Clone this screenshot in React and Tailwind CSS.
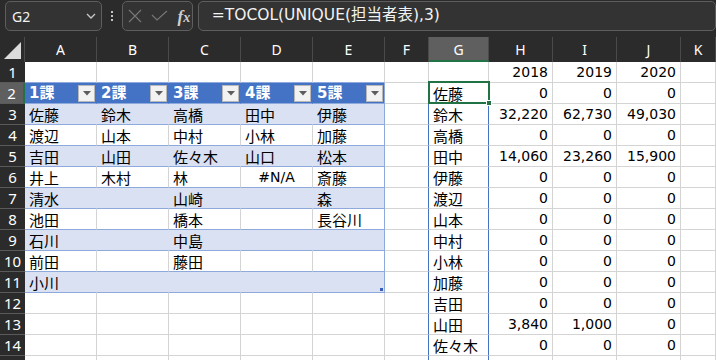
const COLS = ['A', 'B', 'C', 'D', 'E', 'F', 'G', 'H', 'I', 'J', 'K']

const TABLE = [
  ['佐藤', '鈴木', '高橋', '田中', '伊藤'],
  ['渡辺', '山本', '中村', '小林', '加藤'],
  ['吉田', '山田', '佐々木', '山口', '松本'],
  ['井上', '木村', '林', '#N/A', '斎藤'],
  ['清水', '', '山崎', '', '森'],
  ['池田', '', '橋本', '', '長谷川'],
  ['石川', '', '中島', '', ''],
  ['前田', '', '藤田', '', ''],
  ['小川', '', '', '', ''],
]

const NAMES = ['佐藤', '鈴木', '高橋', '田中', '伊藤', '渡辺', '山本', '中村', '小林', '加藤', '吉田', '山田', '佐々木']

const SALES = [
  ['0', '0', '0'],
  ['32,220', '62,730', '49,030'],
  ['0', '0', '0'],
  ['14,060', '23,260', '15,900'],
  ['0', '0', '0'],
  ['0', '0', '0'],
  ['0', '0', '0'],
  ['0', '0', '0'],
  ['0', '0', '0'],
  ['0', '0', '0'],
  ['0', '0', '0'],
  ['3,840', '1,000', '0'],
  ['0', '0', '0'],
]

const cjk = "font-['Noto_Sans_CJK_JP',sans-serif]"
const num = "font-['DejaVu_Sans','Noto_Sans_CJK_JP',sans-serif]"

function FilterButton() {
  return (
    <span className="flex h-[17px] w-[17px] items-center justify-center border border-[#b8b8b8] bg-[#f2f2f2]">
      <svg width="8" height="5" viewBox="0 0 8 5">
        <path d="M0 0h8L4 4.5z" fill="#5c5c5c" />
      </svg>
    </span>
  )
}

function FormulaBar() {
  return (
    <div className="flex h-[37px] items-start bg-[#2b2b2b] pl-[5px] pt-[1px] font-['Noto_Sans','Noto_Sans_CJK_JP',sans-serif] text-[#f2f2f2]">
      <div className="flex h-[30px] w-[101px] items-center justify-between rounded-[5px] border border-[#5e5e5e] bg-[#333333] pl-[6px] pr-[5px] text-[14px]">
        <span>G2</span>
        <svg width="10" height="6" viewBox="0 0 10 6">
          <path d="M1 1l4 4 4-4" fill="none" stroke="#c8c8c8" strokeWidth="1.3" />
        </svg>
      </div>
      <div className="flex h-[30px] w-[21px] flex-col items-center justify-center gap-[2px]">
        <span className="h-[2px] w-[2px] bg-[#c4c4c4]" />
        <span className="h-[2px] w-[2px] bg-[#c4c4c4]" />
        <span className="h-[2px] w-[2px] bg-[#c4c4c4]" />
      </div>
      <div className="flex h-[30px] w-[73px] items-center rounded-[5px] border border-[#5e5e5e] bg-[#333333] pl-[5px]">
        <svg width="14" height="14" viewBox="0 0 14 14">
          <path d="M1 1l12 12M13 1L1 13" stroke="#767676" strokeWidth="1.2" />
        </svg>
        <svg className="ml-[9px]" width="17" height="12" viewBox="0 0 17 12">
          <path d="M1 5l5 5L16 1" fill="none" stroke="#767676" strokeWidth="1.2" />
        </svg>
        <span className="ml-[9px] font-['Liberation_Serif',serif] text-[17px] font-bold italic leading-none text-[#cfcfcf]">
          f<span className="text-[14px]">x</span>
        </span>
      </div>
      <div className={`ml-[5px] flex h-[30px] w-[540px] items-center rounded-[5px] border border-[#5e5e5e] bg-[#333333] pl-[13px] text-[15.5px] ${num}`}>
        =TOCOL(UNIQUE(担当者表),3)
      </div>
    </div>
  )
}

function cellTone(r, c) {
  const inTable = c <= 4 && r >= 2 && r <= 11
  if (inTable) {
    const edge = c === 4
    if (r === 2) return edge ? 'bg-[#4472c4] border-r-[#8ea9db] border-b-[#8ea9db]' : 'bg-[#4472c4] border-r-[#4472c4] border-b-[#8ea9db]'
    if (r % 2 === 1) return edge ? 'bg-[#d9e1f2] border-r-[#8ea9db] border-b-[#8ea9db]' : 'bg-[#d9e1f2] border-r-[#d9e1f2] border-b-[#8ea9db]'
    return edge ? 'bg-white border-r-[#8ea9db] border-b-[#8ea9db]' : 'bg-white border-r-[#d4d4d4] border-b-[#8ea9db]'
  }
  if (r === 1 && c <= 4) return 'bg-white border-r-[#d4d4d4] border-b-[#8ea9db]'
  if ((c === 5 || c === 6) && r >= 2) return 'bg-white border-r-[#4472c4] border-b-[#d4d4d4]'
  return 'bg-white border-r-[#d4d4d4] border-b-[#d4d4d4]'
}

function cellContent(r, c) {
  if (c <= 4 && r === 2) return { head: `${c + 1}課` }
  if (c <= 4 && r >= 3 && r <= 11) {
    const v = TABLE[r - 3][c]
    if (v === '#N/A') return { text: v, align: 'center' }
    return { text: v, align: 'left' }
  }
  if (c === 6 && r >= 2 && r <= 14) return { text: NAMES[r - 2], align: 'left' }
  if (c >= 7 && c <= 9) {
    if (r === 1) return { text: ['2018', '2019', '2020'][c - 7], align: 'right' }
    if (r >= 2 && r <= 14) return { text: SALES[r - 2][c - 7], align: 'right' }
  }
  return null
}

function Cell({ r, c }) {
  const content = cellContent(r, c)
  const tone = cellTone(r, c)
  const selected = r === 2 && c === 6
  return (
    <div className={`relative h-[21px] border-r border-b ${tone}`}>
      {content?.head && (
        <div className={`flex h-[20px] items-center justify-between pl-[4px] pr-[1px] ${num} text-[15px] font-bold text-white`}>
          <span>{content.head}</span>
          <FilterButton />
        </div>
      )}
      {content?.text && content.align === 'left' && (
        <div className={`truncate whitespace-nowrap pl-[4px] text-[15px] leading-[21px] text-black ${cjk}`}>{content.text}</div>
      )}
      {content?.text && content.align === 'right' && (
        <div className={`pr-[4px] text-right text-[14px] leading-[21px] text-black ${num}`}>{content.text}</div>
      )}
      {content?.text && content.align === 'center' && (
        <div className={`text-center text-[14px] leading-[21px] text-black ${num}`}>{content.text}</div>
      )}
      {selected && (
        <div className="absolute -left-[1px] -top-[2px] bottom-[-1px] right-[-2px] z-10 border-2 border-[#217346]">
          <span className="absolute -bottom-[4px] -right-[4px] h-[6px] w-[6px] border border-white bg-[#217346]" />
        </div>
      )}
      {r === 11 && c === 4 && <span className="absolute bottom-[1px] right-[1px] h-[3px] w-[3px] bg-[#3a5fb8]" />}
    </div>
  )
}

export default function App() {
  const rows = Array.from({ length: 15 }, (_, i) => i + 1)
  return (
    <div className="h-[360px] w-[716px] overflow-hidden bg-white">
      <FormulaBar />
      <div className="grid grid-cols-[25px_72px_72px_72px_72px_72px_44px_60px_64px_64px_64px_1fr] font-['Noto_Sans',sans-serif]">
        <div className="flex h-[25px] items-end justify-end border-r border-[#4a4a4a] bg-[#2b2b2b] pb-[3px] pr-[3px]">
          <svg width="17" height="17" viewBox="0 0 17 17">
            <path d="M17 0V17H0z" fill="#dcdcdc" />
          </svg>
        </div>
        {COLS.map((col) =>
          col === 'G' ? (
            <div key={col} className="flex h-[25px] items-center justify-center border-r border-b-2 border-r-[#4a4a4a] border-b-[#217346] bg-[#5f5f5f] pt-[2px] text-[14px] text-white">
              {col}
            </div>
          ) : (
            <div key={col} className="flex h-[25px] items-center justify-center border-r border-[#4a4a4a] bg-[#2b2b2b] text-[14px] text-white">
              {col}
            </div>
          )
        )}
        {rows.map((r) => [
          r === 2 ? (
            <div key={`h${r}`} className="flex h-[21px] items-center justify-center border-r-2 border-b border-r-[#217346] border-b-[#5a5a5a] bg-[#5f5f5f] text-[15px] text-white">
              {r}
            </div>
          ) : (
            <div key={`h${r}`} className="flex h-[21px] items-center justify-center border-b border-[#5a5a5a] bg-[#2b2b2b] text-[15px] text-white">
              {r}
            </div>
          ),
          ...COLS.map((_, c) => <Cell key={`${r}-${c}`} r={r} c={c} />),
        ])}
      </div>
    </div>
  )
}
